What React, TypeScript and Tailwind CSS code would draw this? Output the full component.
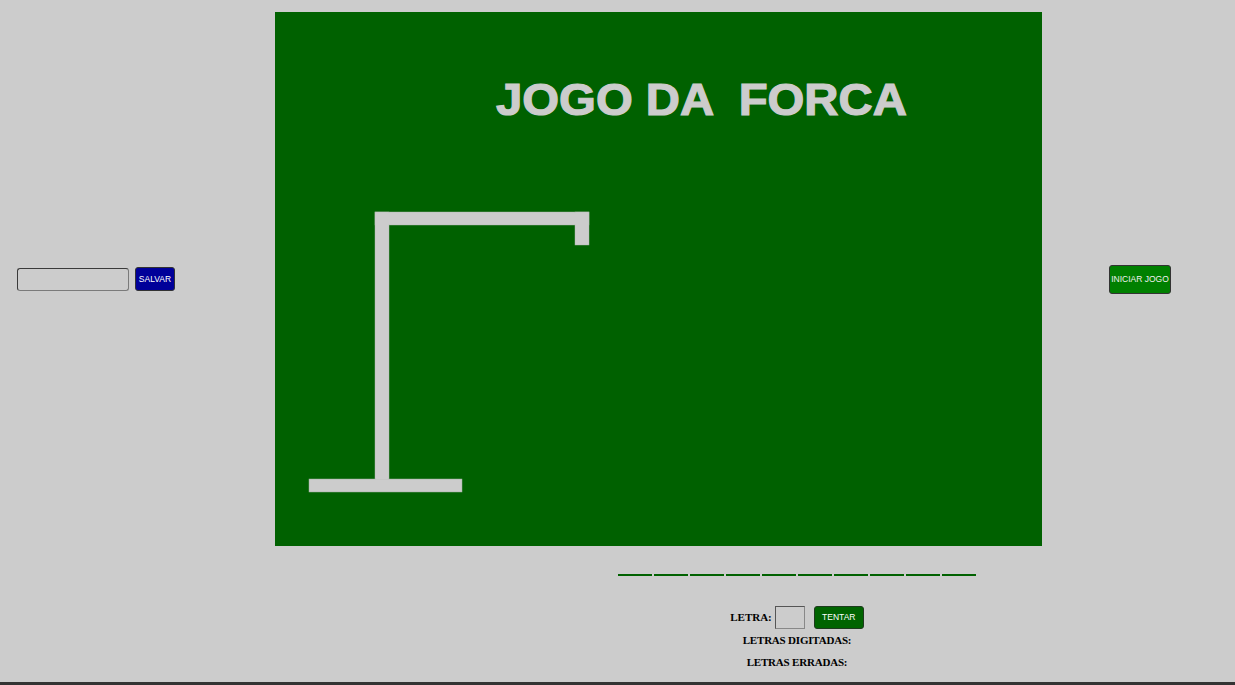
import React from "react";

export default function App() {
  const slots = Array.from({ length: 10 });
  return (
    <div className="w-[1235px] h-[685px] bg-[#cccccc] flex flex-col overflow-hidden">
      <div className="flex-1 flex flex-col">
        {/* top row */}
        <div className="flex pt-[12px]">
          <div className="w-[275px] flex items-center pl-[17px] gap-[6px]">
            <input
              type="text"
              className="w-[112px] h-[23px] rounded-[3px] border border-t-[#3a3a3a] border-l-[#3a3a3a] border-r-[#7a7a7a] border-b-[#7a7a7a] bg-[#cccccc] outline-none"
            />
            <button className="w-[40px] h-[24px] rounded-[3px] border border-[#333] bg-[#000099] text-[8.5px] text-white font-['Liberation_Sans',Arial,sans-serif] flex items-center justify-center">
              SALVAR
            </button>
          </div>
          <div className="w-[767px] h-[534px] bg-[#006100] flex flex-col">
            <div className="mt-[66px] ml-[221px] h-[44px] leading-[44px] text-[44px] font-bold text-[#cccccc] font-['Liberation_Sans',Arial,sans-serif] whitespace-pre origin-left scale-x-[1.075] [-webkit-text-stroke:1.2px_#cccccc]">
              JOGO DA  FORCA
            </div>
            <svg
              className="mt-[85px] ml-[30px] block"
              width="290"
              height="290"
              viewBox="0 0 290 290"
            >
              <g fill="#cccccc" stroke="#9fae9f" strokeWidth="0.5">
                <rect x="70" y="5" width="214" height="13" />
                <rect x="70" y="5" width="14" height="267" />
                <rect x="270" y="5" width="14" height="33" />
                <rect x="4" y="272" width="153" height="13" />
              </g>
              <g fill="#cccccc">
                <rect x="70.5" y="5.5" width="213" height="12" />
                <rect x="70.5" y="5.5" width="13" height="267" />
                <rect x="270.5" y="5.5" width="13" height="32" />
              </g>
            </svg>
          </div>
          <div className="flex-1 flex items-center justify-center pl-[3px]">
            <button className="w-[62px] h-[29px] rounded-[3px] border border-[#333] bg-[#008000] text-[8.5px] text-[#f0f0f0] font-['Liberation_Sans',Arial,sans-serif] flex items-center justify-center whitespace-nowrap">
              INICIAR JOGO
            </button>
          </div>
        </div>

        {/* bottom section */}
        <div className="pl-[359px] flex flex-col items-center">
          <div className="mt-[28px] flex gap-[2px]">
            {slots.map((_, i) => (
              <span key={i} className="block w-[34px] h-[2px] bg-[#006100]" />
            ))}
          </div>
          <div className="mt-[30px] flex items-center h-[23px] font-['Liberation_Serif','Times_New_Roman',serif] font-bold text-[11px] text-black">
            <span>LETRA:</span>
            <input
              type="text"
              className="ml-[3px] w-[30px] h-[23px] border border-t-[#555] border-l-[#555] border-r-[#888] border-b-[#888] bg-[#cccccc] outline-none"
            />
            <button className="ml-[9px] w-[50px] h-[23px] rounded-[3px] border border-[#1e3a1e] bg-[#006400] text-[8.5px] font-normal text-white font-['Liberation_Sans',Arial,sans-serif] flex items-center justify-center">
              TENTAR
            </button>
          </div>
          <div className="leading-[22px] font-['Liberation_Serif','Times_New_Roman',serif] font-bold text-[11px] tracking-[-0.2px] text-black">
            LETRAS DIGITADAS:
          </div>
          <div className="leading-[22px] font-['Liberation_Serif','Times_New_Roman',serif] font-bold text-[11px] tracking-[-0.2px] text-black">
            LETRAS ERRADAS:
          </div>
        </div>
      </div>
      <div className="h-[3px] bg-[#333333]" />
    </div>
  );
}
